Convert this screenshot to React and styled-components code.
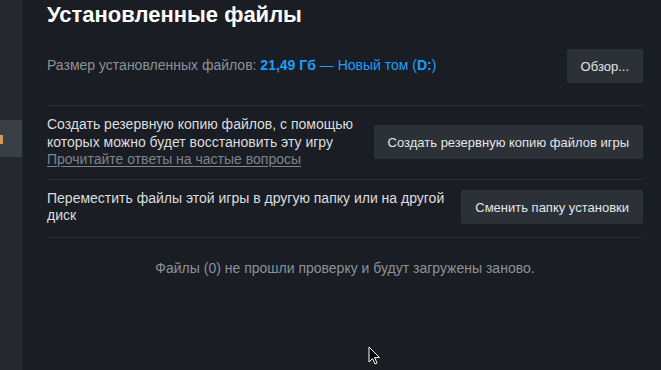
import React from "react";
import styled, { createGlobalStyle } from "styled-components";

const Global = createGlobalStyle`
  html, body { margin: 0; padding: 0; background: #1a1d24; }
  body { font-family: Arial, "Liberation Sans", sans-serif; }
  * { box-sizing: border-box; }
`;

const Page = styled.div`
  position: relative;
  display: flex;
  width: 661px;
  height: 370px;
  overflow: hidden;
  background: #1a1d24;
`;

const Sidebar = styled.div`
  width: 23px;
  flex: none;
  background: #25282d;
  padding-top: 120px;
  border-right: 1px solid #1f2227;
`;

const SideItem = styled.div`
  height: 37px;
  background: #3a3f47;
  display: flex;
  align-items: center;
`;

const SideMark = styled.span`
  display: block;
  width: 3px;
  height: 9px;
  margin-top: 2px;
  background: #d9975a;
`;

const Main = styled.div`
  flex: 1;
  padding: 0 18px 0 24px;
  display: flex;
  flex-direction: column;
`;

const Title = styled.h1`
  margin: 0;
  font-size: 22px;
  line-height: 30px;
  font-weight: 700;
  color: #ffffff;
`;

const Row = styled.div`
  display: flex;
  align-items: center;
  justify-content: space-between;
  gap: 16px;
  padding: ${(p) => p.$pad || "10px 0"};
  border-bottom: 1px solid #2a2e36;
`;

const Text = styled.div`
  flex: 1;
  font-size: 14px;
  line-height: 17.5px;
  color: ${(p) => (p.$muted ? "#8b929a" : "#dcdedf")};
`;

const Blue = styled.span`
  color: #1a9fff;
  font-weight: ${(p) => (p.$bold ? 700 : 400)};
`;

const Link = styled.a`
  display: block;
  color: #7d848c;
  text-decoration: underline;
  text-underline-offset: 2px;
  cursor: pointer;
`;

const Button = styled.button`
  flex: none;
  height: 34px;
  padding: 0 14px;
  border: none;
  border-radius: 2px;
  background: #2c3037;
  color: #e3e6e8;
  font-family: Arial, "Liberation Sans", sans-serif;
  font-size: 13px;
`;

const Note = styled.div`
  padding-top: 22px;
  text-align: center;
  font-size: 14px;
  color: #8b929a;
`;

const Cursor = styled.svg`
  position: absolute;
  left: 368px;
  top: 346px;
`;

export default function App() {
  return (
    <>
      <Global />
      <Page>
        <Sidebar>
          <SideItem>
            <SideMark />
          </SideItem>
        </Sidebar>
        <Main>
          <Title>Установленные файлы</Title>
          <Row $pad="19px 0 22px">
            <Text $muted>
              Размер установленных файлов: <Blue $bold>21,49 Гб</Blue>{" "}
              <Blue>
                — Новый том (<Blue $bold>D:</Blue>)
              </Blue>
            </Text>
            <Button>Обзор...</Button>
          </Row>
          <Row>
            <Text>
              Создать резервную копию файлов, с помощью которых можно будет
              восстановить эту игру
              <Link>Прочитайте ответы на частые вопросы</Link>
            </Text>
            <Button>Создать резервную копию файлов игры</Button>
          </Row>
          <Row $pad="10px 0 12px">
            <Text>
              Переместить файлы этой игры в другую папку или на другой диск
            </Text>
            <Button>Сменить папку установки</Button>
          </Row>
          <Note>Файлы (0) не прошли проверку и будут загружены заново.</Note>
        </Main>
        <Cursor width="13" height="20" viewBox="0 0 13 20">
          <path
            d="M1 1 L1 16 L4.5 12.5 L7 18 L9 17 L6.6 11.6 L11.5 11.6 Z"
            fill="#000"
            stroke="#fff"
            strokeWidth="1"
            strokeLinejoin="round"
          />
        </Cursor>
      </Page>
    </>
  );
}
